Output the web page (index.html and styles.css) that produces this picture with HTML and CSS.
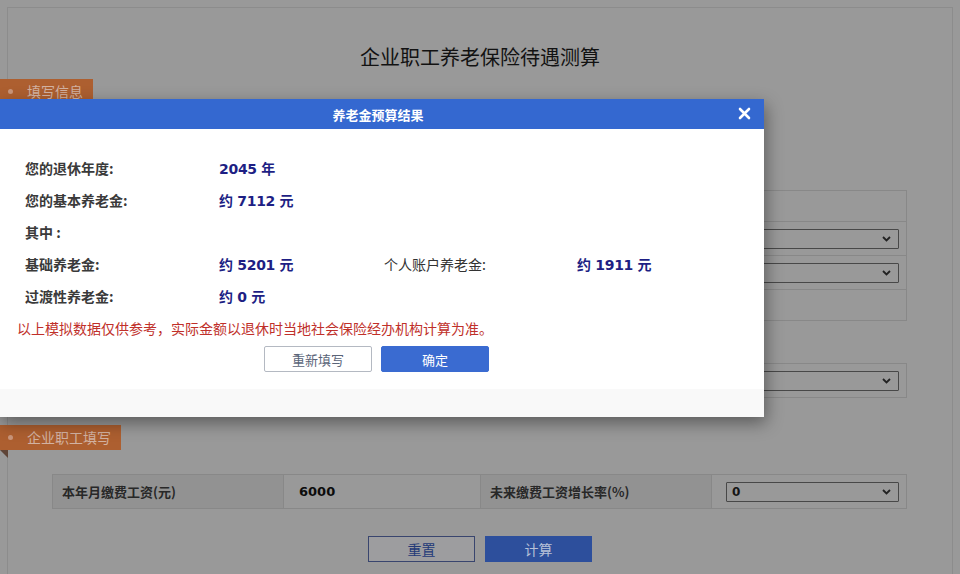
FILE: index.html
```html
<!DOCTYPE html>
<html lang="zh-CN">
<head>
<meta charset="utf-8">
<title>企业职工养老保险待遇测算</title>
<link rel="stylesheet" href="styles.css">
</head>
<body>
<div class="page">
  <div class="card">
    <h1 class="title">企业职工养老保险待遇测算</h1>

    <div class="tag"><span class="dot"></span>填写信息</div>

    <div class="grid grid-a">
      <div class="cell label"></div><div class="cell"></div><div class="cell label"></div><div class="cell"></div>
      <div class="cell label"></div><div class="cell"></div><div class="cell label"></div>
      <div class="cell sel-cell"><div class="select"><span></span><svg width="9" height="6" viewBox="0 0 9 6"><path d="M1 1L4.5 4.5L8 1" stroke="#222" stroke-width="1.8" fill="none"/></svg></div></div>
      <div class="cell label"></div><div class="cell"></div><div class="cell label"></div>
      <div class="cell sel-cell"><div class="select"><span></span><svg width="9" height="6" viewBox="0 0 9 6"><path d="M1 1L4.5 4.5L8 1" stroke="#222" stroke-width="1.8" fill="none"/></svg></div></div>
      <div class="cell label"></div><div class="cell"></div><div class="cell label"></div><div class="cell"></div>
    </div>

    <div class="grid grid-b">
      <div class="cell label"></div><div class="cell"></div><div class="cell label"></div>
      <div class="cell sel-cell"><div class="select"><span></span><svg width="9" height="6" viewBox="0 0 9 6"><path d="M1 1L4.5 4.5L8 1" stroke="#222" stroke-width="1.8" fill="none"/></svg></div></div>
    </div>

    <div class="tag tag-emp"><span class="dot"></span>企业职工填写</div>

    <div class="grid grid-c">
      <div class="cell label">本年月缴费工资(元)</div>
      <div class="cell value">6000</div>
      <div class="cell label">未来缴费工资增长率(%)</div>
      <div class="cell sel-cell"><div class="select"><span>0</span><svg width="9" height="6" viewBox="0 0 9 6"><path d="M1 1L4.5 4.5L8 1" stroke="#222" stroke-width="1.8" fill="none"/></svg></div></div>
    </div>

    <div class="actions">
      <button class="btn btn-reset">重置</button>
      <button class="btn btn-calc">计算</button>
    </div>
  </div>
</div>

<div class="dialog">
  <div class="dialog-head">
    <span class="dialog-title">养老金预算结果</span>
    <span class="close"><svg width="13" height="13" viewBox="0 0 13 13"><path d="M2 2L11 11M11 2L2 11" stroke="#fff" stroke-width="2.6" stroke-linecap="round"/></svg></span>
  </div>
  <div class="dialog-body">
    <div class="result">
      <div class="r-label">您的退休年度:</div>
      <div class="r-value">2045 年</div>
      <div></div><div></div>

      <div class="r-label">您的基本养老金:</div>
      <div class="r-value">约 7112 元</div>
      <div></div><div></div>

      <div class="r-label">其中 :</div>
      <div></div><div></div><div></div>

      <div class="r-label">基础养老金:</div>
      <div class="r-value">约 5201 元</div>
      <div class="r-label r-plain">个人账户养老金:</div>
      <div class="r-value">约 1911 元</div>

      <div class="r-label">过渡性养老金:</div>
      <div class="r-value">约 0 元</div>
      <div></div><div></div>
    </div>
    <p class="notice">以上模拟数据仅供参考，实际金额以退休时当地社会保险经办机构计算为准。</p>
    <div class="dialog-actions">
      <button class="dbtn dbtn-ghost">重新填写</button>
      <button class="dbtn dbtn-primary">确定</button>
    </div>
  </div>
  <div class="dialog-foot"></div>
</div>
</body>
</html>
```

FILE: styles.css
```css
* { box-sizing: border-box; }

html, body {
  margin: 0;
  height: 574px;
  overflow: hidden;
}

html {
  background: rgb(153, 153, 153);
}

body {
  position: relative;
  background: rgb(153, 153, 153);
  font-family: "Noto Sans CJK SC", "Noto Sans", sans-serif;
  color: #222;
}

/* background page, shown dimmed behind the dialog */
.page {
  background-image: linear-gradient(rgb(153, 153, 153), rgb(153, 153, 153));
  box-shadow: inset 0 0 0 2000px rgb(153, 153, 153);
  height: 574px;
  padding: 7px 7px 0;
}

.card {
  border: 1px solid rgb(140, 140, 140);
  padding: 35px 0 0;
  height: 568px;
}

.title {
  margin: 0;
  font-size: 20px;
  line-height: 28px;
  font-weight: 400;
  text-align: center;
  color: #121212;
}

/* ribbon tags */
.tag {
  position: relative;
  display: flex;
  align-items: center;
  width: fit-content;
  height: 25px;
  margin: 8px 0 0 -8px;
  padding: 0 10px 0 8px;
  background: #ad5f30;
  color: #d2b2a2;
  font-size: 14px;
  line-height: 25px;
}

.tag .dot {
  width: 5px;
  height: 5px;
  border-radius: 50%;
  background: #c9957a;
  margin-right: 14px;
}

.tag-emp {
  margin-top: 27px;
}

.tag-emp::after {
  content: "";
  position: absolute;
  left: 0;
  top: 100%;
  border-top: 8px solid #5f4538;
  border-left: 8px solid transparent;
}

/* form grids */
.grid {
  display: grid;
  grid-template-columns: 231px 197px 231px 1fr;
  margin: 0 45px 0 44px;
  border-top: 1px solid rgb(136, 136, 136);
  border-left: 1px solid rgb(136, 136, 136);
}

.cell {
  border-right: 1px solid rgb(136, 136, 136);
  border-bottom: 1px solid rgb(136, 136, 136);
  display: flex;
  align-items: center;
  font-size: 13px;
}

.cell.label {
  box-shadow: inset 0 0 0 300px rgb(146, 146, 146);
  color: #282828;
  font-weight: 700;
  padding-left: 9px;
}

.cell.value {
  padding-left: 15px;
  font-family: "DejaVu Sans", "Noto Sans", sans-serif;
  font-weight: 700;
  font-size: 13px;
  color: #0c0c0c;
}

.grid-a {
  margin-top: 86px;
  grid-template-rows: 31px 34px 34px 31px;
}

.grid-b {
  margin-top: 42px;
  grid-template-rows: 34px;
}

.grid-c {
  margin-top: 24px;
  grid-template-rows: 34px;
}

.sel-cell {
  padding-left: 14px;
}

.select {
  width: 173px;
  height: 20px;
  border: 1px solid #484848;
  border-radius: 1px;
  display: flex;
  align-items: center;
  justify-content: space-between;
  padding: 0 7px 0 5px;
  font-family: "DejaVu Sans", "Noto Sans", sans-serif;
  font-weight: 700;
  font-size: 12px;
  color: #161616;
}

.actions {
  display: flex;
  justify-content: center;
  gap: 10px;
  margin-top: 27px;
}

.btn {
  width: 107px;
  height: 26px;
  font-family: "Noto Sans CJK SC", sans-serif;
  font-size: 14px;
  cursor: pointer;
}

.btn-reset {
  background: rgb(157, 157, 159);
  border: 1px solid #39456e;
  color: #243a78;
}

.btn-calc {
  background: #2d4f9c;
  border: 1px solid #2d4f9c;
  color: #b7c1d8;
}

/* dialog */
.dialog {
  position: absolute;
  left: 0;
  top: 99px;
  width: 764px;
  z-index: 20;
  background: #fff;
  box-shadow: 2px 6px 16px rgba(0, 0, 0, 0.4);
}

.dialog-head {
  position: relative;
  height: 30px;
  background: #3468d0;
  display: flex;
  align-items: center;
  justify-content: center;
  padding-right: 8px;
}

.dialog-title {
  color: #fff;
  font-size: 13px;
  font-weight: 700;
}

.close {
  position: absolute;
  right: 13px;
  top: 8px;
  width: 13px;
  height: 13px;
  display: flex;
}

.dialog-body {
  padding: 23px 0 17px 25px;
}

.result {
  display: grid;
  grid-template-columns: 194px 165px 193px 1fr;
  grid-auto-rows: 32px;
  align-items: center;
}

.r-label {
  font-size: 14px;
  font-weight: 700;
  color: #3a3a3a;
}

.r-plain {
  font-weight: 400;
  color: #333;
}

.r-value {
  font-family: "DejaVu Sans", "Noto Sans CJK SC", sans-serif;
  font-size: 14px;
  font-weight: 700;
  color: #1e1f84;
  letter-spacing: -0.3px;
}

.notice {
  margin: 0 0 0 -8px;
  line-height: 32px;
  font-size: 14px;
  color: #c0302a;
}

.dialog-actions {
  display: flex;
  justify-content: center;
  gap: 9px;
  margin-top: 2px;
  padding-right: 36px;
}

.dbtn {
  width: 108px;
  height: 26px;
  font-family: "Noto Sans CJK SC", sans-serif;
  font-size: 13px;
  border-radius: 2px;
  cursor: pointer;
}

.dbtn-ghost {
  background: #fff;
  border: 1px solid #b4b9c2;
  color: #5a6478;
}

.dbtn-primary {
  background: #3a6bd1;
  border: 1px solid #3a6bd1;
  color: #fff;
}

.dialog-foot {
  height: 28px;
  background: #f9f9f9;
}
```
